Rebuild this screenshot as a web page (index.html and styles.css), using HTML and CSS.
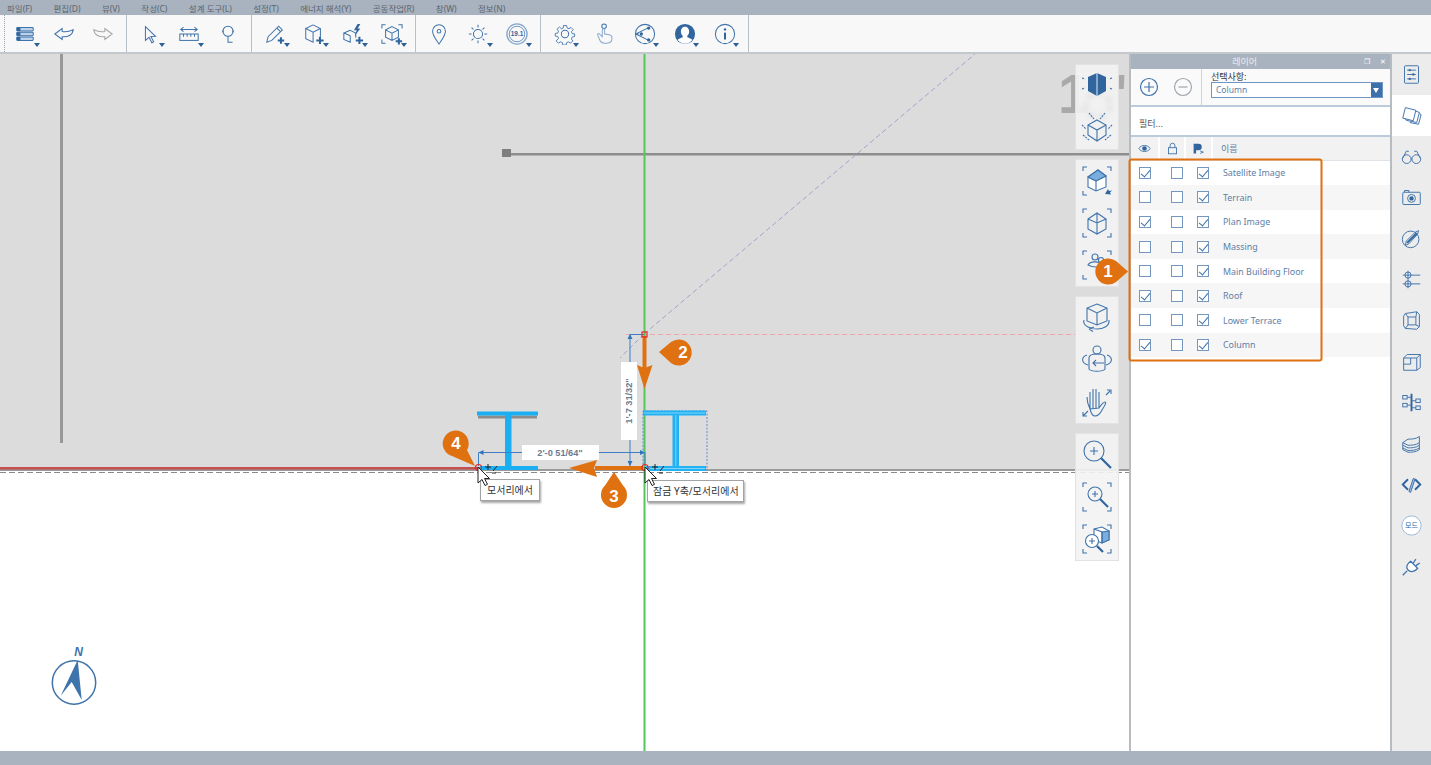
FILE: index.html
```html
<!DOCTYPE html>
<html lang="ko">

<head>
    <meta charset="UTF-8">
    <meta name="viewport" content="width=device-width, initial-scale=1.0">
    <title>레이어</title>
    <link rel="stylesheet" href="styles.css">
</head>

<body>
    <div class="menubar">
        <span>파일(F)</span><span>편집(D)</span><span>뷰(V)</span><span>작성(C)</span><span>설계 도구(L)</span><span>설정(T)</span><span>에너지 해석(Y)</span><span>공동작업(R)</span><span>창(W)</span><span>정보(N)</span>
    </div>

    <div class="toolbar">
        <div class="group first">
            <div class="tool drop"><svg class="ico" viewBox="0 0 24 24"><rect x="3" y="5" width="18" height="3.6" rx="1" fill="#bcd2e8"/><rect x="3" y="10.2" width="18" height="3.6" rx="1" fill="#bcd2e8"/><rect x="3" y="15.4" width="18" height="3.6" rx="1" fill="#bcd2e8"/><path class="solid" d="M3 5h4v3.6H3zM3 10.2h4v3.6H3zM3 15.4h4v3.6H3z"/></svg></div>
            <div class="tool"><svg class="ico" viewBox="0 0 24 24"><path d="M2 12l8-6v3.4c4 .6 8 0 12-2.2-.4 5.400-5 8.400-12 7.800v3z"/></svg></div>
            <div class="tool"><svg class="ico grey" viewBox="0 0 24 24"><path d="M22 12l-8-6v3.400c-4 .6-8 0-12-2.200.4 5.400 5 8.400 12 7.800v3z"/></svg></div>
        </div>
        <div class="group">
            <div class="tool drop"><svg class="ico" viewBox="0 0 24 24"><path d="M7 4l11 10.500-5 .2 3 5.800-2 1-3-5.800-4 3.300z"/></svg></div>
            <div class="tool drop"><svg class="ico" viewBox="0 0 24 24"><path d="M3 7h18M6 4.500L3 7l3 2.500M18 4.500L21 7l-3 2.500"/><rect x="2" y="12" width="20" height="7"/><path d="M6 12v3M10 12v3M14 12v3M18 12v3"/></svg></div>
            <div class="tool"><svg class="ico" viewBox="0 0 24 24"><circle cx="12" cy="9" r="5.500"/><path d="M12 14.500V21h5"/><path class="solid" d="M6 7.500l1.500 1.500L6 10.500zM18 7.500l-1.500 1.500 1.500 1.500z"/></svg></div>
        </div>
        <div class="group">
            <div class="tool drop"><svg class="ico" viewBox="0 0 24 24"><path d="M3 21l1.500-6L16 3.500l4 4L8.500 19z"/><path d="M14 5.500l4 4"/><path class="thick" d="M15 19h7M18.500 15.500v7"/></svg></div>
            <div class="tool drop"><svg class="ico" viewBox="0 0 24 24"><path d="M11 2l8 4v9M19 6l-8 4-8-4 8-4M11 10v11L3 17V6l8 4"/><path class="thick" d="M14.500 19h8M18.500 15v8"/></svg></div>
            <div class="tool drop"><svg class="ico" viewBox="0 0 24 24"><path d="M9 8l6 3v5M9 14l-7-3 7-3M2 11v7l7 3v-7"/><path class="solid" d="M17 1l-4 7h3l-2 6 6-8h-3l3-5z"/><path class="thick" d="M15 19h8M19 15v8"/></svg></div>
            <div class="tool drop"><svg class="ico" viewBox="0 0 24 24"><path d="M12 4l7 3.500v8L12 19l-7-3.500v-8zM5 7.500l7 3.500 7-3.500M12 11v8"/><path d="M1 6V2h4M19 2h4v4M1 18v4h4"/><path class="thick" d="M16 20h7M19.500 16.500v7"/></svg></div>
        </div>
        <div class="group">
            <div class="tool"><svg class="ico" viewBox="0 0 24 24"><path d="M12 23C8 17 5 13.500 5 9a7 7 0 0 1 14 0c0 4.500-3 8-7 14z"/><circle cx="12" cy="9" r="2"/></svg></div>
            <div class="tool drop"><svg class="ico" viewBox="0 0 24 24"><circle cx="12" cy="12" r="5"/><path d="M12 2v3M12 19v3M2 12h3M19 12h3M5 5l2 2M17 17l2 2M19 5l-2 2M7 17l-2 2"/></svg></div>
            <div class="tool drop"><svg class="ico pale" viewBox="0 0 24 24"><circle cx="12" cy="12" r="11" stroke-width="1.500"/><circle cx="12" cy="12" r="8.500" stroke="#3f73ab" stroke-width=".8"/><text class="ico-num" x="12" y="14.500">19.1</text></svg></div>
        </div>
        <div class="group wide">
            <div class="tool drop"><svg class="ico" viewBox="0 0 24 24"><circle cx="12" cy="12" r="4"/><path d="M10 2h4l.6 3 2.400 1 2.500-1.700 2.800 2.800L20 9.600l1 2.400 3 .4v3.200l-3 .6-1 2.400 1.700 2.500-2.800 2.800-2.500-1.700-2.400 1-.6 3h-4l-.6-3-2.400-1-2.500 1.700-2.800-2.800L4 18l-1-2.400-3-.6v-3.200l3-.4 1-2.400-1.700-2.500 2.800-2.800L7.600 6 10 5z" transform="translate(1.400 1) scale(.88)"/></svg></div>
            <div class="tool"><svg class="ico pale" viewBox="0 0 24 24"><circle cx="11" cy="3.500" r="2.500" stroke="#3f73ab"/><path d="M6 12l3 3V7.500a1.300 1.300 0 0 1 2.600 0V12l5 .8c2 .4 3 1.500 3 3.200v1c0 3-2 5-5.500 5H11c-2.500 0-3.500-1-4.500-3L4 13c-.6-1.500 1-2 2-1z"/></svg></div>
            <div class="tool drop"><svg class="ico" viewBox="0 0 24 24"><circle cx="12" cy="12" r="10.500"/><path d="M2 12l14-7M2 12l14 7M2 12h3"/><circle class="solid" cx="16" cy="5.500" r="1.800"/><circle class="solid" cx="16" cy="18.500" r="1.800"/><circle class="solid" cx="8" cy="12" r="1.800"/></svg></div>
            <div class="tool drop"><svg class="ico" viewBox="0 0 24 24"><circle class="solid" cx="12" cy="12" r="11"/><path class="cutout" d="M12 4c3.500 0 4.500 3 4.500 5.500 0 2-1 3.500-2 4.500v1.500c2 1 4.500 1.500 5.500 3a10 10 0 0 1-16 0c1-1.500 3.500-2 5.500-3V14c-1-1-2-2.500-2-4.500C7.500 7 8.500 4 12 4z"/></svg></div>
            <div class="tool drop"><svg class="ico" viewBox="0 0 24 24"><circle cx="12" cy="12" r="10.500"/><path class="thick" d="M12 10.500V18"/><circle class="solid" cx="12" cy="7" r="1.300"/></svg></div>
        </div>
    </div>

    <div class="main">
        <div class="canvas">
            <svg class="scene" viewBox="0 54 1129 697">
                <rect x="0" y="54" width="1129" height="416" fill="#dcdcdc"/>
                <text class="ghost" x="1058" y="113">1</text>
                <text class="ghost" x="1114" y="113">'</text>
                <circle class="ghost-ring" cx="1098" cy="105" r="12"/>
                <rect x="60" y="54" width="3" height="389" fill="#989898"/>
                <rect x="505" y="153" width="624" height="2.500" fill="#8d8d8d"/>
                <rect x="502" y="149" width="9" height="8" fill="#7f7f7f"/>
                <path d="M644 334L975 54M644 334L620 358" stroke="#9ea6cc" stroke-dasharray="5 3" fill="none"/>
                <path d="M626 334.500H1075" stroke="#eba9a9" stroke-dasharray="5 3" fill="none"/>
                <rect x="0" y="469" width="1129" height="2" fill="#9a9a9a"/>
                <rect x="0" y="467" width="480" height="2.500" fill="#c4504f"/>
                <path d="M0 472.500H1129" stroke="#8a8a8a" stroke-dasharray="6 3" fill="none"/>
                <rect x="643.500" y="54" width="2" height="697" fill="#55c75a"/>

                <rect x="478" y="415.500" width="59" height="3" fill="#8c8c8c"/>
                <path d="M477 411.500h61v4h-61zM505 415h6.500v52H505zM480 466h58v4h-58z" fill="#1aaef2"/>
                <rect x="643" y="411" width="64" height="59" fill="none" stroke="#5d8ed0" stroke-dasharray="2 1.500"/>
                <path d="M643 410.500h63v5h-63zM672.500 415h6.500v52h-6.500zM646 466h60v5h-60z" fill="#22b2f4"/>
                <path d="M675.800 415v51M644 413h61M650 468.500h55" stroke="#a8e3fb" stroke-width=".7" fill="none"/>

                <path d="M630 466V334.500H644M478.500 466V452.500H645V466" fill="none" stroke="#3f7ec4"/>
                <path d="M630 334l-2.500 5h5zM630 466l-2.500-5h5zM478.500 452.500l5-2.500v5zM645 452.500l-5-2.500v5z" fill="#2f74c0"/>

                <rect x="621" y="362" width="16" height="78" fill="#fff"/>
                <rect x="522" y="445" width="77" height="15" fill="#fff"/>
                <text class="dim" transform="translate(632 401) rotate(-90)">1'-7 31/32"</text>
                <text class="dim" x="560" y="456">2'-0 51/64"</text>

                <g class="compass">
                    <circle cx="74" cy="682.500" r="21.700"/>
                    <path d="M77.700 660L60.700 695.700 71.700 682 81.700 700z"/>
                    <text x="78.500" y="656">N</text>
                </g>
            </svg>

            <div class="tip tip-left">모서리에서</div>
            <div class="tip tip-right">잠금 Y축/모서리에서</div>

            <div class="view-stack">
                <div class="view-card">
                    <div class="view-tool"><svg class="ico big" viewBox="0 0 32 32"><path class="solid" d="M16 3l9 4v14l-9 5-9-5V7z"/><path class="cutout-line" d="M16 3v23"/><path d="M1 8l3 1M31 8l-3 1M1 19l3-1M31 19l-3-1" stroke-dasharray="2 1"/></svg></div>
                    <div class="view-tool"><svg class="ico big" viewBox="0 0 32 32"><path d="M16 8l9 5v10l-9 6-9-6V13zM7 13l9 5 9-5M16 18v11"/><path d="M8 1l5 6M24 1l-5 6M1 13l4 4M31 13l-4 4M2 23l6 5M30 23l-6 5" stroke-dasharray="2 1"/></svg></div>
                </div>
                <div class="view-card">
                    <div class="view-tool"><svg class="ico big" viewBox="0 0 32 32"><path d="M2 6V2h4M26 2h4v4M2 26v4h4"/><path d="M7 12l10-7 8 6v11l-10 4-8-4z" fill="#fff"/><path d="M7 12l8 4 10-5M15 16v10"/><path d="M17 5l8 6-10 5-8-4z" fill="#79aede"/><path class="solid" d="M24 29l3-5 1 2 3-.5-2 2 1 2z"/></svg></div>
                    <div class="view-tool"><svg class="ico big" viewBox="0 0 32 32"><path d="M2 6V2h4M26 2h4v4M2 26v4h4M30 26v4h-4"/><path d="M7 12l9-6 9 6v10l-9 5-9-5zM7 12l9 4 9-4M16 16v11M16 6v10"/></svg></div>
                    <div class="view-tool"><svg class="ico big" viewBox="0 0 32 32"><path d="M2 6V2h4M26 2h4v4M2 26v4h4M30 26v4h-4"/><circle cx="14" cy="8" r="3"/><circle cx="20" cy="11" r="2.500"/><path d="M7 16c2-4 11-4 13-1 2 2-5 5-13 1z"/></svg></div>
                </div>
                <div class="view-card">
                    <div class="view-tool"><svg class="ico big" viewBox="0 0 32 32"><path d="M16 2l10 4v13l-10 4-10-4V6zM6 6l10 5 10-5M16 11v12"/><path d="M3 18c-2 6 7 9 13 9 6 0 13-3 12-9M8 27l4 2.500M8 27l5-2"/></svg></div>
                    <div class="view-tool"><svg class="ico big" viewBox="0 0 32 32"><circle cx="16" cy="6" r="4"/><path d="M8 14c0-3 4-4 8-4s8 1 8 4v11c-2 3-14 3-16 0z"/><path d="M6 11C0 13 0 19 7 21M26 11c6 2 6 8-1 10"/><path d="M23 19H12M15 16l-3 3 3 3"/></svg></div>
                    <div class="view-tool"><svg class="ico big" viewBox="0 0 32 32"><path d="M9 23c-2-4-3-8-3-12M9 23V6M12 22V3M15 22V3M18 22V6M18 22c2-3 4-6 6-6s-1 5-3 8c-2 4-4 6-7 6s-4-3-5-7z"/><path d="M25 9l4-4M26 4h4v4M2 30l5-5M2 26v4h4"/></svg></div>
                </div>
                <div class="view-card">
                    <div class="view-tool"><svg class="ico big" viewBox="0 0 32 32"><circle cx="13" cy="12" r="10"/><path d="M13 8v8M9 12h8"/><path class="thick" d="M20 19l10 10"/></svg></div>
                    <div class="view-tool"><svg class="ico big" viewBox="0 0 32 32"><path d="M2 6V2h4M26 2h4v4M2 26v4h4M30 26v4h-4"/><circle cx="14" cy="13" r="7"/><path d="M14 10v6M11 13h6"/><path class="thick" d="M19 18l8 8"/></svg></div>
                    <div class="view-tool"><svg class="ico big" viewBox="0 0 32 32"><path d="M2 6V2h4M26 2h4v4M2 26v4h4M30 26v4h-4"/><path d="M13 6l8-2 7 4v9l-7 3-8-3z" fill="#fff"/><path d="M21 9l7-1v9l-7 3z" fill="#79aede"/><path d="M13 6l8 3v11"/><circle cx="11" cy="18" r="6.500" fill="#fff"/><path d="M11 15v6M8 18h6"/><path class="thick" d="M16 23l6 6"/></svg></div>
                </div>
            </div>
        </div>

        <div class="panel">
            <div class="panel-title">
                <span class="panel-name">레이어</span>
                <span class="panel-btn">&#10064;</span>
                <span class="panel-btn">&#10005;</span>
            </div>
            <div class="panel-tools">
                <svg class="round-btn" viewBox="0 0 20 20"><circle cx="10" cy="10" r="8.500"/><path d="M10 5v10M5 10h10"/></svg>
                <svg class="round-btn off" viewBox="0 0 20 20"><circle cx="10" cy="10" r="8.500"/><path d="M5.500 10h9"/></svg>
                <div class="picker">
                    <label>선택사항:</label>
                    <div class="select">Column<span class="select-arrow"></span></div>
                </div>
            </div>
            <div class="filter">필터...</div>
            <div class="layer-head">
                <div class="col"><svg class="ico head-ico" viewBox="0 0 16 16"><path d="M1 8c3-5 11-5 14 0-3 5-11 5-14 0z"/><circle class="solid" cx="8" cy="8" r="2.800"/></svg></div>
                <div class="col"><svg class="ico head-ico" viewBox="0 0 16 16"><rect x="3" y="7" width="10" height="7.500"/><path d="M5 7V4.500a3 3 0 0 1 6 0V7"/></svg></div>
                <div class="col"><svg class="ico head-ico" viewBox="0 0 16 16"><path class="solid" d="M2 2h6a3.500 3.500 0 0 1 0 8H5v4H2z"/><path d="M10 11l4 1.500-4 1.500"/></svg></div>
                <div class="col name">이름</div>
            </div>
            <div class="layer-rows">
                <div class="layer-row"><span class="check on"></span><span class="check"></span><span class="check on"></span><span class="layer-name">Satellite Image</span></div>
                <div class="layer-row"><span class="check"></span><span class="check"></span><span class="check on"></span><span class="layer-name">Terrain</span></div>
                <div class="layer-row"><span class="check on"></span><span class="check"></span><span class="check on"></span><span class="layer-name">Plan Image</span></div>
                <div class="layer-row"><span class="check"></span><span class="check"></span><span class="check on"></span><span class="layer-name">Massing</span></div>
                <div class="layer-row"><span class="check"></span><span class="check"></span><span class="check on"></span><span class="layer-name">Main Building Floor</span></div>
                <div class="layer-row"><span class="check on"></span><span class="check"></span><span class="check on"></span><span class="layer-name">Roof</span></div>
                <div class="layer-row"><span class="check"></span><span class="check"></span><span class="check on"></span><span class="layer-name">Lower Terrace</span></div>
                <div class="layer-row"><span class="check on"></span><span class="check"></span><span class="check on"></span><span class="layer-name">Column</span></div>
            </div>
        </div>

        <div class="rail">
            <div class="rail-item"><svg class="ico" viewBox="0 0 24 24"><rect x="4" y="2" width="16" height="20" rx="1"/><path d="M7 7h10M7 12h10M7 17h10"/><circle class="solid" cx="10" cy="7" r="1.300"/><circle class="solid" cx="14" cy="12" r="1.300"/><circle class="solid" cx="10" cy="17" r="1.300"/></svg></div>
            <div class="rail-item active"><svg class="ico" viewBox="0 0 24 24"><path d="M5 3l12 3-3 12-12-3z" fill="#fff"/><path d="M17 7l4 1.500-3 11.500-12-2.500-1-2M21 10l2 1-3 11-10-2"/></svg></div>
            <div class="rail-item"><svg class="ico" viewBox="0 0 24 24"><circle cx="6.500" cy="15" r="5"/><circle cx="17.500" cy="15" r="5"/><path d="M11.500 15h1M2 14L6 6h3M22 14L18 6h-3"/></svg></div>
            <div class="rail-item"><svg class="ico" viewBox="0 0 24 24"><rect x="2" y="6" width="20" height="14" rx="1"/><path d="M4 6V4h5v2"/><circle cx="12" cy="13" r="4.500"/><circle class="solid" cx="12" cy="13" r="2.500"/></svg></div>
            <div class="rail-item"><svg class="ico" viewBox="0 0 24 24"><circle cx="11" cy="13" r="9.500"/><path d="M5 20l1-5L16 5l4-2-1 4L9 18z"/><path class="thick" d="M7 17l11-11"/></svg></div>
            <div class="rail-item"><svg class="ico" viewBox="0 0 24 24"><circle cx="8" cy="7" r="3.500"/><circle cx="8" cy="17" r="3.500"/><path d="M2 7h20M2 17h20M8 2v10M8 12v10"/></svg></div>
            <div class="rail-item"><svg class="ico" viewBox="0 0 24 24"><path d="M5 4l13-2 3 3v14l-3 3-13-1-2-3V7z"/><path d="M8 8h9v9H8zM5 4l3 4M18 2l-1 6M21 19l-4-2M5 21l3-4"/></svg></div>
            <div class="rail-item"><svg class="ico" viewBox="0 0 24 24"><path d="M3 8l4-4h15v15l-4 3H3zM3 8h15v14M18 8l4-4M3 15h8V8"/></svg></div>
            <div class="rail-item"><svg class="ico" viewBox="0 0 24 24"><rect x="2" y="4" width="5" height="4"/><rect x="2" y="13" width="5" height="4"/><rect x="17" y="8" width="5" height="4"/><rect x="17" y="16" width="5" height="4"/><path class="thick" d="M12 2v20"/><path d="M7 6h5M7 15h5M12 10h5M12 18h5"/></svg></div>
            <div class="rail-item"><svg class="ico" viewBox="0 0 24 24"><path d="M21 4c-4 3-9 3-13 3L2 11l6 3c4 0 9 0 13-3z"/><path d="M2 11v3l6 3c4 0 9 0 13-3v-3M2 14v3l6 3c4 0 9 0 13-3v-3M2 17v2l6 3c4 0 9 0 13-3v-2"/></svg></div>
            <div class="rail-item"><svg class="ico" viewBox="0 0 24 24"><path class="thick" d="M8 6l-6 6 6 6M16 6l6 6-6 6"/><path d="M9 20l5-15 2 1-5 15z" fill="#9fbcdc"/></svg></div>
            <div class="rail-item"><svg class="ico" viewBox="0 0 24 24"><circle cx="12" cy="12" r="11" fill="#fff" stroke="#9db8d6"/><text class="ico-mode" x="12" y="15">모드</text></svg></div>
            <div class="rail-item"><svg class="ico plug" viewBox="0 0 24 24"><path d="M11 6l8 8c-3 4-8 5-11 2s-1-7 3-10z" fill="#fff"/><path d="M14 8l3-4.500M17 11l4.500-3M7 17l-5 5"/></svg></div>
        </div>
    </div>

    <div class="statusbar"></div>

    <!-- 주석 레이어 -->
    <svg class="marks" viewBox="0 0 1431 765">
        <rect class="mark-box" x="1129.500" y="159.500" width="192" height="201" rx="2"/>
        <path class="mark-line" d="M644.500 336V368M643 468H595"/>
        <path class="mark-fill" d="M637 365l7.500 3 8-3-8 24zM569 468l28-8-3 8 3 9z"/>

        <path class="mark-fill" d="M1128 271.500L1116 261a13 13 0 1 0 0 21z"/>
        <path class="mark-fill" d="M659 352l12-10a13 13 0 1 1 0 21z"/>
        <path class="mark-fill" d="M614 472l9 13.500a13 13 0 1 1-18 0z"/>
        <path class="mark-fill" d="M475 466l-8-16a13 13 0 1 0-15 6z"/>
        <text class="mark-num" x="1108" y="277">1</text>
        <text class="mark-num" x="683" y="358">2</text>
        <text class="mark-num" x="614" y="502">3</text>
        <text class="mark-num" x="456" y="449">4</text>

        <circle class="snap" cx="478.500" cy="467.500" r="3"/>
        <rect class="snap" x="642" y="332" width="5" height="5"/>
        <circle class="snap" cx="645" cy="467.500" r="3"/>
        <path class="cursor" d="M478 467v16l4-3.500 3 6 2.500-1.200-3-5.800h5z"/>
        <path class="cursor" d="M645 467v16l4-3.500 3 6 2.500-1.200-3-5.800h5z"/>
        <path class="sign" d="M485 467h6M488 464v6M493 471l4-5M492 473h4M652 467h6M655 464v6M660 471l4-5M659 473h4"/>
    </svg>
</body>

</html>
```

FILE: styles.css
```css
* {
    margin: 0;
    padding: 0;
    box-sizing: border-box;
}

html,
body {
    height: 100%;
    overflow: hidden;
}

body {
    display: flex;
    flex-direction: column;
    position: relative;
    background: #fff;
    font-family: "Noto Sans", "Noto Sans CJK KR", sans-serif;
    font-size: 9px;
    color: #5d7ea6;
}

/* 메뉴 */
.menubar {
    height: 15px;
    display: flex;
    align-items: center;
    gap: 21.400px;
    padding-left: 7px;
    background: #a9b3bf;
    color: #5a6570;
    font-size: 8.500px;
    white-space: nowrap;
}

/* 도구 모음 */
.toolbar {
    height: 39px;
    display: flex;
    padding-left: 2px;
    background: #f8f8f8;
    border-bottom: 2px solid #c3c8cd;
}

.group {
    display: flex;
    align-items: center;
    padding: 3px 3.500px;
    border-right: 1px solid #b9bfc6;
}

.group.first {
    border-left: 1px dotted #9aa3ad;
    margin-left: 2px;
    padding-left: .500px;
}

.tool {
    width: 39px;
    height: 100%;
    display: flex;
    align-items: center;
    justify-content: center;
    position: relative;
}

.wide .tool {
    width: 40px;
}

.tool .ico {
    width: 22px;
    height: 22px;
}

.drop::after {
    content: "";
    position: absolute;
    left: 28px;
    bottom: 2px;
    border-style: solid;
    border-width: 4px 3.500px 0;
    border-color: #2f5f94 transparent transparent;
}

.ico {
    fill: none;
    stroke: #3f73ab;
    stroke-width: 1.100;
    display: block;
}

.ico.grey {
    stroke: #a6a6a6;
}

.ico.pale {
    stroke: #86a8cd;
}

.ico.plug {
    stroke-width: 1.500;
}

.ico .solid {
    fill: #31659e;
    stroke: none;
}

.ico .thick {
    stroke-width: 2.200;
    stroke: #2f659f;
}

.ico .cutout {
    fill: #fff;
    stroke: none;
}

.ico .cutout-line {
    stroke: #cfe0f1;
}

.ico-num {
    font-family: "Liberation Sans", sans-serif;
    font-size: 7px;
    font-weight: bold;
    text-anchor: middle;
    fill: #31659e;
    stroke: none;
}

.ico-mode {
    font-family: "Noto Sans CJK KR", sans-serif;
    font-size: 8px;
    text-anchor: middle;
    fill: #31659e;
    stroke: none;
}

/* 본문 */
.main {
    flex: 1;
    display: flex;
    min-height: 0;
}

.canvas {
    width: 1129px;
    position: relative;
    background: #fff;
}

.scene {
    position: absolute;
    top: 0;
    left: 0;
    width: 1129px;
    height: 697px;
}

.ghost {
    font-family: "Liberation Sans", sans-serif;
    font-size: 56px;
    font-weight: bold;
    fill: #a9a9a9;
    filter: blur(.6px);
}

.ghost-ring {
    fill: none;
    stroke: #6e6e6e;
    stroke-width: 6;
    stroke-dasharray: 7 4;
    filter: blur(2px);
}

.dim {
    font-family: "Liberation Sans", sans-serif;
    font-size: 9.200px;
    font-weight: bold;
    text-anchor: middle;
    fill: #6a7c91;
}

.compass circle {
    fill: none;
    stroke: #3f73ab;
    stroke-width: 1.500;
}

.compass path {
    fill: #3f73ab;
}

.compass text {
    font-family: "Liberation Sans", sans-serif;
    font-size: 12px;
    font-weight: bold;
    font-style: italic;
    text-anchor: middle;
    fill: #3f73ab;
}

.tip {
    position: absolute;
    background: #fff;
    border: 1px solid #a3a3a3;
    box-shadow: 1px 2px 2px rgba(0, 0, 0, .35);
    color: #333;
    font-size: 10px;
    line-height: 20px;
    height: 22px;
    white-space: nowrap;
}

.tip-left {
    left: 480px;
    top: 425px;
    width: 60px;
    padding-left: 6px;
}

.tip-right {
    left: 647px;
    top: 426px;
    width: 97px;
    padding-left: 5px;
}

.view-stack {
    position: absolute;
    top: 10px;
    right: 10px;
    width: 44px;
    display: flex;
    flex-direction: column;
    gap: 9px;
}

.view-card {
    background: rgba(243, 243, 243, .9);
    border: 1px solid #e2e2e2;
}

.view-tool {
    height: 42px;
    display: flex;
    align-items: center;
    justify-content: center;
}

.view-tool .big {
    width: 32px;
    height: 32px;
}

/* 레이어 패널 */
.panel {
    width: 263px;
    background: #fff;
    border-left: 2px solid #b7bcc1;
    border-right: 2px solid #b7bcc1;
}

.panel-title {
    height: 15px;
    display: flex;
    align-items: center;
    justify-content: flex-end;
    gap: 10px;
    padding-right: 4px;
    background: #a9b3bf;
    color: #e9edf1;
    font-size: 9px;
}

.panel-name {
    margin-right: 97px;
}

.panel-btn {
    font-size: 7px;
    color: #fff;
}

.panel-tools {
    height: 38px;
    display: flex;
    align-items: center;
    border-bottom: 2px solid #bccbdb;
    background: #fafafa;
}

.round-btn {
    width: 20px;
    height: 20px;
    margin-left: 8px;
    fill: none;
    stroke: #3f73ab;
    stroke-width: 1.200;
}

.round-btn + .round-btn {
    margin-left: 14px;
}

.round-btn.off {
    stroke: #9fa6ad;
}

.picker {
    flex: 1;
    height: 100%;
    margin-left: 8px;
    padding: 2px 0 0 9px;
    border-left: 1px solid #cfd4d9;
}

.picker label {
    display: block;
    height: 11px;
    line-height: 12px;
    color: #333;
    font-size: 9px;
}

.select {
    width: 172px;
    height: 16px;
    position: relative;
    padding-left: 4px;
    line-height: 14px;
    background: #fff;
    border: 1px solid #6f95c2;
    font-size: 8.500px;
}

.select-arrow {
    position: absolute;
    top: 0;
    right: 0;
    width: 11px;
    height: 14px;
    background: #3d71aa;
}

.select-arrow::after {
    content: "";
    position: absolute;
    top: 5px;
    left: 2px;
    border-style: solid;
    border-width: 5px 3.500px 0;
    border-color: #fff transparent transparent;
}

.filter {
    height: 30px;
    line-height: 33px;
    padding-left: 8px;
    border-bottom: 2px solid #bccbdb;
    color: #555;
}

.layer-head {
    height: 23.500px;
    display: grid;
    grid-template-columns: 29px 26px 27px 1fr;
    background: #f2f2f2;
    border-bottom: 1px solid #dfe3e8;
}

.col {
    display: flex;
    align-items: center;
    justify-content: center;
    border-right: 2px solid #fff;
}

.col.name {
    justify-content: flex-start;
    padding-left: 8px;
    border-right: none;
    color: #5d7ea6;
}

.head-ico {
    width: 13px;
    height: 13px;
}

.layer-row {
    height: 24.600px;
    display: grid;
    grid-template-columns: 28px 35px 18px 1fr;
    align-items: center;
    justify-items: center;
}

.layer-row:nth-child(even) {
    background: #f6f6f6;
}

.check {
    width: 12px;
    height: 12px;
    position: relative;
    background: #fff;
    border: 1px solid #7497c0;
}

.check.on::after {
    content: "";
    position: absolute;
    left: 3px;
    top: 0;
    width: 4px;
    height: 8px;
    border: solid #3a6ea5;
    border-width: 0 1.200px 1.200px 0;
    transform: rotate(40deg);
}

.layer-name {
    justify-self: start;
    padding-left: 11px;
    font-size: 8.900px;
    white-space: nowrap;
}

/* 오른쪽 탭 */
.rail {
    flex: 1;
    background: #ececec;
}

.rail-item {
    height: 41px;
    display: flex;
    align-items: center;
    justify-content: center;
}

.rail-item.active {
    background: #fff;
}

.rail-item .ico {
    width: 21px;
    height: 21px;
}

.statusbar {
    height: 14px;
    background: #a9b3bf;
}

/* 주석 */
.marks {
    position: absolute;
    top: 0;
    left: 0;
    width: 1431px;
    height: 765px;
    pointer-events: none;
}

.mark-box {
    fill: none;
    stroke: #df7110;
    stroke-width: 2;
}

.mark-line {
    fill: none;
    stroke: #df7110;
    stroke-width: 4;
}

.mark-fill {
    fill: #df7110;
}

.mark-num {
    font-family: "Liberation Sans", sans-serif;
    font-size: 17px;
    font-weight: bold;
    text-anchor: middle;
    fill: #fff;
}

.snap {
    fill: none;
    stroke: #e8262a;
    stroke-width: 1.200;
}

.cursor {
    fill: #fff;
    stroke: #222;
}

.sign {
    fill: none;
    stroke: #222;
}
```
